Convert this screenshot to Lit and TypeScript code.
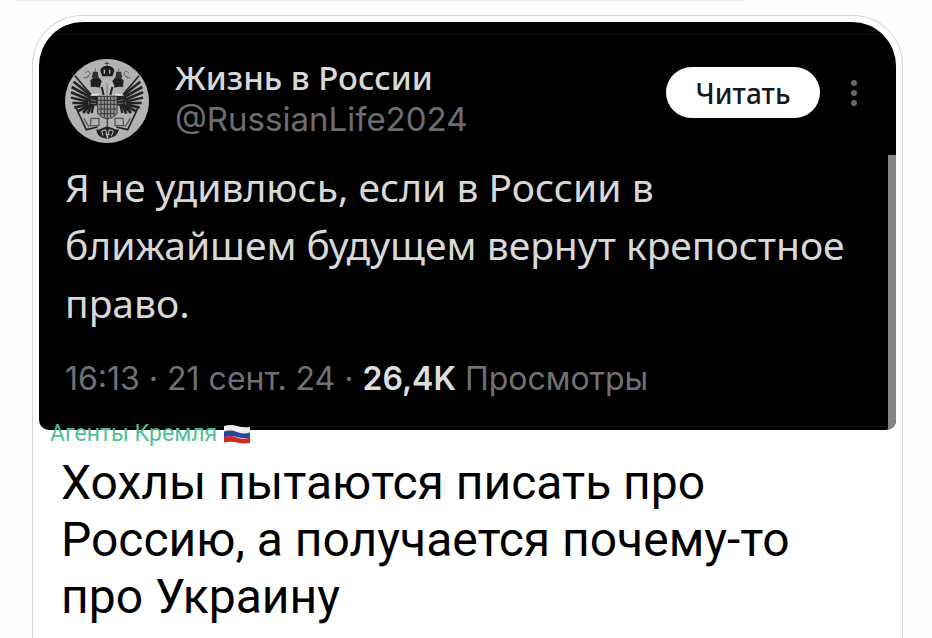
import { LitElement, html, css, svg } from "lit";
import { customElement } from "lit/decorators.js";

// One wing: feathers fan out from the shoulder; the other wing is its mirror.
const feathers = [
  [112, 142, 58, 78, 5], [104, 136, 54, 96, 8], [102, 142, 48, 112, 8], [100, 150, 46, 128, 8],
  [98, 156, 46, 144, 7], [98, 160, 50, 160, 8], [98, 164, 56, 174, 8], [100, 168, 68, 184, 8],
  [104, 166, 82, 190, 8], [108, 166, 96, 192, 8], [114, 164, 108, 190, 7],
];

const wing = svg`
  ${feathers.map(([x1, y1, x2, y2, w]) => svg`<line x1=${x1} y1=${y1} x2=${x2} y2=${y2} stroke-width=${w} />`)}
  <path d="M96 140L128 138L126 168L100 166Z" fill="#222" stroke="none" />
  <path d="M106 136l24-1" stroke="#e4e4e4" stroke-width="5" />
  <path d="M104 150l18 4M104 160l18 2" stroke="#999" stroke-width="2" />
  <path d="M104 92q10-12 26-8l8 10-6 20q-14-4-26-2z" fill="#202020" stroke="none" />
  <path d="M108 84l4-18h14l3 18z" fill="#303030" stroke="none" />
  <path d="M119 56v10M88 70q8-10 14-2t-12 16M84 84q10 4 16-6" stroke="#666" stroke-width="3" />
  <path d="M62 176l12 26 18 38 34-8" stroke-width="5" />
  <path d="M106 206h24v22h-26zM84 206l16 26" stroke="#555" stroke-width="4" />
`;

@customElement("eagle-avatar")
export class EagleAvatar extends LitElement {
  static styles = css`
    :host { display: block; flex: none; width: 84px; height: 84px; }
    svg { display: block; width: 100%; height: 100%; }
  `;
  render() {
    return html`<svg viewBox="28 28 252 252" fill="none" stroke="#222" role="img" aria-label="Жизнь в России">
      <circle cx="154" cy="154" r="125" fill="#b2b2b2" stroke="#c6c6c6" stroke-width="2" />
      <g>${wing}</g>
      <g transform="translate(308 0) scale(-1 1)">${wing}</g>
      <path d="M134 64q0-14 20-16 22 2 22 16l-6 16h-30z" fill="#1c1c1c" stroke="none" />
      <path d="M154 36v14M147 41h14" stroke="#444" stroke-width="3" />
      <path d="M146 60v12M162 60v12" stroke="#bbb" stroke-width="4" />
      <path d="M136 106l12-18h14l14 18-4 30h-36z" fill="#b8b8b8" stroke="none" />
      <path d="M138 112l6 24M170 112l-6 24" stroke-width="6" />
      <path d="M154 100v34" stroke="#888" stroke-width="4" />
      <path d="M126 140h58v52q-12 14-29 16-18-4-29-16z" fill="#969696" stroke="#333" stroke-width="3" />
      <path d="M136 142v54M146 142v60M155 138v68M165 142v60M175 142v54M128 152h54M128 164h54M128 178h54M132 192h46" stroke="#333" stroke-width="3" />
      <path d="M155 206v34" stroke="#444" stroke-width="4" />
      <path d="M122 238q8 4 16-2l16-6 18 6q8 6 18 2-4 20-18 24l-18 6-18-6q-12-4-14-24z" fill="#222" stroke="none" />
      <path d="M142 258l-4-14 12-4 5 26 6-26 12 4-6 16M150 254h12" stroke="#c0c0c0" stroke-width="3" />
    </svg>`;
  }
}

@customElement("flag-icon")
export class FlagIcon extends LitElement {
  static styles = css`
    :host { display: block; width: 26px; height: 19px; }
    svg { display: block; width: 100%; height: 100%; }
  `;
  render() {
    return html`<svg viewBox="0 0 26 19" role="img" aria-label="Россия">
      <path d="M0 1Q7-1 13 1T26 2V8Q20 9 13 7T0 7Z" fill="#eee" />
      <path d="M0 6.500Q7 4.500 13 7T26 7.500V13Q19 14 13 12T0 12.500Z" fill="#244a9e" />
      <path d="M0 12Q7 10 13 12.500T26 12.500V18Q19 19 13 17.500T0 17.500Z" fill="#c92a2c" />
    </svg>`;
  }
}

@customElement("app-root")
export class AppRoot extends LitElement {
  static styles = css`
    :host {
      display: flex;
      flex-direction: column;
      box-sizing: border-box;
      height: 100vh;
      overflow: hidden;
      background: #fefefe;
      font-family: Roboto, "Noto Sans", sans-serif;
    }
    .previous {
      flex: none;
      height: 1px;
      margin: 0 188px 0 16px;
      background: #f0f0f0;
    }
    .message {
      flex: 1 0 auto;
      margin: 14px 29px 0 32px;
      padding: 6px;
      background: #fff;
      border: 1px solid #d4d4d4;
      border-bottom: 0;
      border-radius: 50px 50px 0 0;
    }
    .shot {
      position: relative;
      box-sizing: border-box;
      padding: 12px 0 3px;
      overflow: hidden;
      background: #000;
      border-radius: 44px 44px 10px 10px;
      font-family: Inter, "Noto Sans", sans-serif;
    }
    .tweet {
      padding: 24px 26px 27px;
      border: solid #111;
      border-width: 1px 0;
    }
    .scroll {
      position: absolute;
      top: 133px;
      right: 0;
      bottom: 0;
      width: 8px;
      background: #848484;
    }
    header { display: flex; align-items: flex-start; }
    .who { flex: 1; margin-left: 26px; }
    .name, .handle {
      margin: 0;
      white-space: nowrap;
    }
    .name { font: 500 33px/38px "Noto Sans", sans-serif; color: #d8d8d8; }
    .handle { font-size: 33px; line-height: 44px; color: #6c6d72; }
    .follow {
      width: 154px;
      height: 51px;
      margin-top: 8px;
      padding: 0;
      border: 0;
      border-radius: 26px;
      background: #fff;
      color: #16181c;
      font: 500 28px/50px "Noto Sans", sans-serif;
    }
    .more {
      display: flex;
      flex-direction: column;
      align-items: center;
      gap: 4px;
      width: 20px;
      margin: 21px 6px 0 24px;
      padding: 0;
      border: 0;
      background: none;
    }
    .dot { width: 6px; height: 6px; border-radius: 50%; background: #68696c; }
    .text {
      margin: 15px 0 0;
      color: #d8d8d8;
      font: 400 39px/58px "Noto Sans", sans-serif;
    }
    .meta {
      margin: 27px 0 0;
      color: #707176;
      font-size: 32px;
      line-height: 40px;
      white-space: nowrap;
    }
    .meta b { color: #dedede; font-weight: 600; }
    .author {
      position: relative;
      display: flex;
      align-items: center;
      gap: 7px;
      margin: -9px 0 0 11px;
      color: #50bf92;
      font-size: 23px;
      line-height: 26px;
      text-decoration: none;
    }
    .caption {
      margin: 7px 22px 0;
      color: #000;
      font-size: 48px;
      line-height: 57px;
    }
  `;
  render() {
    return html`
      <div class="previous"></div>
      <article class="message">
        <div class="shot">
          <section class="tweet">
            <header>
              <eagle-avatar></eagle-avatar>
              <div class="who">
                <p class="name">Жизнь в России</p>
                <p class="handle">@RussianLife2024</p>
              </div>
              <button class="follow">Читать</button>
              <button class="more" aria-label="Ещё">
                <span class="dot"></span><span class="dot"></span><span class="dot"></span>
              </button>
            </header>
            <p class="text">Я не удивлюсь, если в России в ближайшем будущем вернут крепостное право.</p>
            <p class="meta">16:13 · 21 сент. 24 · <b>26,4K</b> Просмотры</p>
          </section>
          <div class="scroll"></div>
        </div>
        <a class="author" href="#">Агенты Кремля <flag-icon></flag-icon></a>
        <p class="caption">Хохлы пытаются писать про Россию, а получается почему-то про Украину</p>
      </article>
    `;
  }
}
